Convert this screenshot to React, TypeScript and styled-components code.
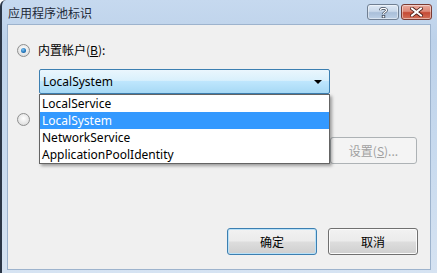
import React from "react";
import styled, { createGlobalStyle } from "styled-components";

const GlobalStyle = createGlobalStyle`
    html, body {
        margin: 0;
        padding: 0;
        background: #ffffff;
    }
    body {
        font-family: "Noto Sans", "Noto Sans CJK SC", sans-serif;
        font-size: 12px;
        color: #000000;
    }
`;

const Window = styled.div`
    width: 437px;
    height: 273px;
    box-sizing: border-box;
    display: flex;
    flex-direction: column;
    background: linear-gradient(180deg, #c6d9ef 0%, #bdd2ea 15%, #c9dbef 60%, #d6e3f2 100%);
    border-left: 2px solid #2b3646;
    border-top-left-radius: 6px;
    padding: 0 6px 3px 5px;
    overflow: hidden;
`;

const TitleBar = styled.div`
    height: 24px;
    flex-shrink: 0;
    display: flex;
    align-items: flex-start;
    justify-content: space-between;
`;

const Title = styled.span`
    font-family: "Noto Sans CJK SC", sans-serif;
    font-size: 12px;
    color: #1e2a38;
    margin-top: 4px;
    margin-left: 1px;
`;

const CaptionButtons = styled.div`
    display: flex;
    gap: 2px;
    margin-top: 4px;
    margin-right: -1px;
`;

const CaptionButton = styled.div<{ $close?: boolean }>`
    width: ${(p) => (p.$close ? 31 : 32)}px;
    height: 16px;
    box-sizing: border-box;
    border: 1px solid ${(p) => (p.$close ? "#7a3a32" : "#707f92")};
    border-radius: 3px;
    display: flex;
    align-items: center;
    justify-content: center;
    background: ${(p) =>
        p.$close
            ? "linear-gradient(180deg, #e9a99c 0%, #dd8878 45%, #c54a35 55%, #d2705a 100%)"
            : "linear-gradient(180deg, #dfe9f5 0%, #c9d8ea 45%, #a9bfd9 55%, #bdd0e6 100%)"};
    box-shadow: inset 0 0 0 1px rgba(255, 255, 255, 0.45);
`;

const Client = styled.div`
    flex: 1;
    background: #f0f0f0;
    border: 1px solid #9db3cd;
    display: flex;
    flex-direction: column;
    padding: 18px 10px 14px 9px;
`;

const RadioRow = styled.div<{ $top: number }>`
    display: flex;
    align-items: center;
    gap: 8px;
    height: 14px;
    margin-top: ${(p) => p.$top}px;
`;

const Radio = styled.span<{ $checked?: boolean }>`
    width: 13px;
    height: 13px;
    box-sizing: border-box;
    border-radius: 50%;
    border: 1px solid #8e8f8f;
    background: radial-gradient(circle at 50% 40%, #ffffff 0%, #e6e6e6 60%, #cfcfcf 100%);
    display: flex;
    align-items: center;
    justify-content: center;
    flex-shrink: 0;

    &::after {
        content: "";
        width: 5px;
        height: 5px;
        border-radius: 50%;
        display: ${(p) => (p.$checked ? "block" : "none")};
        background: radial-gradient(circle at 40% 35%, #7ec3f2 0%, #1f73b8 60%, #0e4d86 100%);
    }
`;

const Label = styled.span`
    font-family: "Noto Sans CJK SC", sans-serif;
    font-size: 12px;
    line-height: 14px;
    color: #000000;
    white-space: nowrap;

    u {
        text-decoration: underline;
    }
`;

const ComboWrap = styled.div`
    position: relative;
    margin-left: 22px;
    margin-top: 12px;
    width: 291px;
    height: 25px;
    z-index: 2;
`;

const Combo = styled.div`
    height: 25px;
    box-sizing: border-box;
    border: 1px solid #3c7fb1;
    border-radius: 2px;
    background: linear-gradient(180deg, #eaf6fd 0%, #d9f0fc 45%, #bee6fd 50%, #a7d9f5 100%);
    display: flex;
    align-items: center;
    justify-content: space-between;
    padding: 0 7px 0 3px;
    font-size: 12px;
`;

const Arrow = styled.span`
    width: 0;
    height: 0;
    border-left: 4px solid transparent;
    border-right: 4px solid transparent;
    border-top: 4px solid #000000;
`;

const DropList = styled.ul`
    position: absolute;
    top: 25px;
    left: 0;
    width: 291px;
    margin: 0;
    padding: 0;
    list-style: none;
    box-sizing: border-box;
    background: #ffffff;
    border: 1px solid #646464;
    box-shadow: 2px 2px 3px rgba(0, 0, 0, 0.35);
`;

const DropItem = styled.li<{ $selected?: boolean }>`
    height: 17px;
    line-height: 17px;
    padding-left: 2px;
    font-size: 12px;
    background: ${(p) => (p.$selected ? "#3399ff" : "transparent")};
    color: ${(p) => (p.$selected ? "#ffffff" : "#000000")};
`;

const FieldRow = styled.div`
    display: flex;
    align-items: center;
    justify-content: space-between;
    margin-top: 11px;
    margin-left: 22px;
    margin-right: 3px;
    height: 27px;
`;

const TextField = styled.div`
    width: 283px;
    height: 23px;
    box-sizing: border-box;
    border: 1px solid #c9cbce;
    background: #f0f0f0;
`;

const Button = styled.button<{ $default?: boolean; $width?: number }>`
    width: ${(p) => p.$width ?? 90}px;
    height: 27px;
    box-sizing: border-box;
    border: 1px solid ${(p) => (p.$default ? "#3c7fb1" : "#707070")};
    border-radius: 3px;
    background: linear-gradient(180deg, #f2f2f2 0%, #ebebeb 48%, #dddddd 52%, #cfcfcf 100%);
    box-shadow: inset 0 0 0 1px ${(p) => (p.$default ? "#b9e1f8" : "#fbfbfb")};
    font-family: "Noto Sans CJK SC", sans-serif;
    font-size: 12px;
    color: #000000;
    padding: 0;

    &:disabled {
        border-color: #adb2b5;
        background: #f4f4f4;
        box-shadow: none;
        color: #a0a0a0;
    }
`;

const Spacer = styled.div`
    flex: 1;
`;

const ButtonRow = styled.div`
    display: flex;
    justify-content: flex-end;
    gap: 11px;
    margin-right: 2px;
`;

const items = ["LocalService", "LocalSystem", "NetworkService", "ApplicationPoolIdentity"];

const App: React.FC = () => {
    return (
        <>
            <GlobalStyle />
            <Window>
                <TitleBar>
                    <Title>应用程序池标识</Title>
                    <CaptionButtons>
                        <CaptionButton>
                            <svg width="9" height="11" viewBox="0 0 9 11">
                                <path d="M1.5 3.2 C1.5 0.8 7.5 0.8 7.5 3.2 C7.5 5 4.5 5 4.5 7" fill="none" stroke="#3b4656" strokeWidth="2.6" />
                                <path d="M1.5 3.2 C1.5 0.8 7.5 0.8 7.5 3.2 C7.5 5 4.5 5 4.5 7" fill="none" stroke="#ffffff" strokeWidth="1.2" />
                                <rect x="3.2" y="8.3" width="2.6" height="2.6" fill="#ffffff" stroke="#3b4656" strokeWidth="0.8" />
                            </svg>
                        </CaptionButton>
                        <CaptionButton $close>
                            <svg width="13" height="10" viewBox="0 0 13 10">
                                <path d="M2 1.5 L11 8.5 M11 1.5 L2 8.5" stroke="#4a1b14" strokeWidth="3.6" strokeLinecap="square" />
                                <path d="M2 1.5 L11 8.5 M11 1.5 L2 8.5" stroke="#ffffff" strokeWidth="2" strokeLinecap="square" />
                            </svg>
                        </CaptionButton>
                    </CaptionButtons>
                </TitleBar>
                <Client>
                    <RadioRow $top={0}>
                        <Radio $checked />
                        <Label>
                            内置帐户(<u>B</u>):
                        </Label>
                    </RadioRow>
                    <ComboWrap>
                        <Combo>
                            <span>LocalSystem</span>
                            <Arrow />
                        </Combo>
                        <DropList>
                            {items.map((item) => (
                                <DropItem key={item} $selected={item === "LocalSystem"}>
                                    {item}
                                </DropItem>
                            ))}
                        </DropList>
                    </ComboWrap>
                    <RadioRow $top={18}>
                        <Radio />
                        <Label>
                            自定义帐户(<u>C</u>):
                        </Label>
                    </RadioRow>
                    <FieldRow>
                        <TextField />
                        <Button disabled $width={87}>
                            设置(<u>S</u>)...
                        </Button>
                    </FieldRow>
                    <Spacer />
                    <ButtonRow>
                        <Button $default>确定</Button>
                        <Button>取消</Button>
                    </ButtonRow>
                </Client>
            </Window>
        </>
    );
};

export default App;
